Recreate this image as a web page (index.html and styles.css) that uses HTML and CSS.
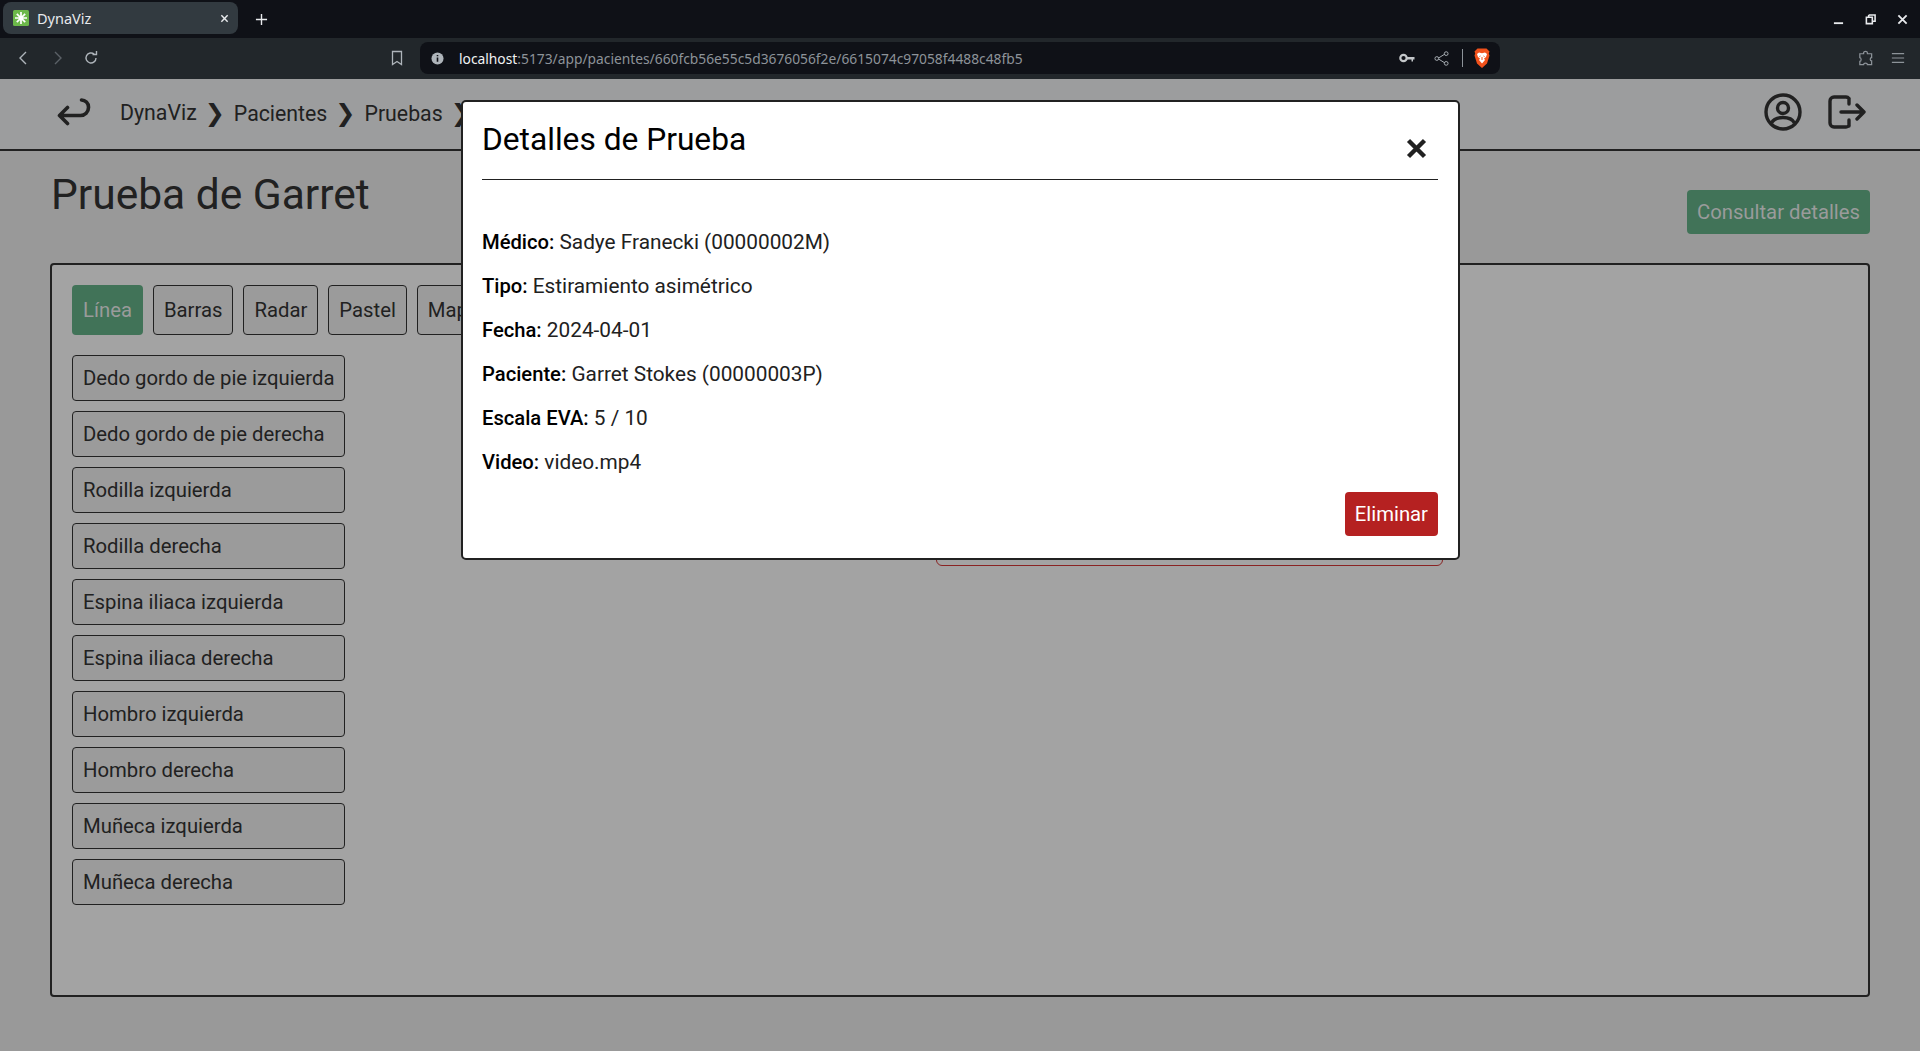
FILE: index.html
```html
<!DOCTYPE html>
<html lang="es">
  <head>
    <meta charset="utf-8">
    <title>DynaViz</title>
    <link rel="stylesheet" href="styles.css">
  </head>
  <body>
    <div class="tabstrip">
      <div class="tab">
        <svg class="favicon" viewBox="0 0 16 16">
          <rect width="16" height="16" rx="1.5" fill="#6cb84a"/>
          <path d="M8 2v12M2 8h12M3.8 3.8l8.4 8.4M12.2 3.8l-8.4 8.4" stroke="#fff" stroke-width="1.7"/>
        </svg>
        <span class="tab-title">DynaViz</span>
        <svg class="tab-close" viewBox="0 0 10 10"><path d="M1.5 1.5l7 7M8.5 1.5l-7 7" stroke="#e8eaed" stroke-width="1.6"/></svg>
      </div>
      <svg class="tab-new" viewBox="0 0 14 14"><path d="M7 1v12M1 7h12" stroke="#e8eaed" stroke-width="1.5"/></svg>
      <div class="win-controls">
        <svg viewBox="0 0 12 12"><path d="M1 10h10" stroke="#e8eaed" stroke-width="2"/></svg>
        <svg viewBox="0 0 12 12"><path d="M4 1h7v7H8.500M4 1v2.500M1.500 3.500h6.500v7H1.500z" fill="none" stroke="#e8eaed" stroke-width="1.700"/></svg>
        <svg viewBox="0 0 12 12"><path d="M1.500 1.500l9 9M10.500 1.500l-9 9" stroke="#e8eaed" stroke-width="2"/></svg>
      </div>
    </div>

    <div class="toolbar">
      <svg class="tool-icon nav-back" viewBox="0 0 16 16"><path d="M11 2L5 8l6 6" fill="none" stroke="#aeb4ba" stroke-width="1.400"/></svg>
      <svg class="tool-icon nav-forward" viewBox="0 0 16 16"><path d="M5 2l6 6-6 6" fill="none" stroke="#5b6167" stroke-width="1.400"/></svg>
      <svg class="tool-icon nav-reload" viewBox="0 0 16 16"><path d="M13 8a5 5 0 1 1-1.700-3.800M9.500 4.500h4V1" fill="none" stroke="#aeb4ba" stroke-width="1.400"/></svg>
      <svg class="tool-icon nav-bookmark" viewBox="0 0 16 16"><path d="M3.500 1.500h9v13L8 11.500l-4.500 3z" fill="none" stroke="#aeb4ba" stroke-width="1.300"/></svg>
      <div class="address">
        <svg class="info-icon" viewBox="0 0 14 14"><circle cx="7" cy="7" r="6.500" fill="#aeb4ba"/><path d="M7 6v4.500M7 3.200v1.500" stroke="#0f1117" stroke-width="1.700"/></svg>
        <span class="url"><span class="url-host">localhost</span>:5173/app/pacientes/660fcb56e55c5d3676056f2e/6615074c97058f4488c48fb5</span>
        <svg class="key-icon" viewBox="0 0 16 10"><circle cx="4.500" cy="5" r="3.200" fill="none" stroke="#c4c7ca" stroke-width="2.200"/><path d="M8 4h7.500v2.500h-1.500v2h-1.500v-2H8z" fill="#c4c7ca"/></svg>
        <svg class="share-icon" viewBox="0 0 16 16"><path d="M4 8l8-5M4 8l8 5" stroke="#aeb4ba" stroke-width="1"/><circle cx="3" cy="8" r="2" fill="#0f1117" stroke="#aeb4ba"/><circle cx="13" cy="2.800" r="2" fill="#0f1117" stroke="#aeb4ba"/><circle cx="13" cy="13.200" r="2" fill="#0f1117" stroke="#aeb4ba"/></svg>
        <span class="address-sep"></span>
        <svg class="brave-icon" viewBox="0 0 16 20">
          <path d="M3.500 0.500h9l2 2 1 1-.7 2 .7 2-2.500 8L8 20l-5-4.500-2.500-8 .7-2-.7-2 1-1z" fill="#f1511b"/>
          <path d="M3 6l2-1.500 3 .8 3-.8L13 6l-1 3-2 1.500L11 12l-3 3.500L5 12l1-1.500L4 9z" fill="#fff"/>
          <path d="M6.500 8l-1 .5M9.500 8l1 .5M8 9v3" stroke="#f1511b" stroke-width="1"/>
        </svg>
      </div>
      <svg class="tool-icon puzzle-icon" viewBox="0 0 18 18"><path d="M7 3.500C7 1.500 11 1.500 11 3.500V4.500h4.500V8.500C13.500 8.500 13.500 12 15.500 12V16H11C11 14 7 14 7 16H3V12.500C4.800 12.500 4.800 8.500 3 8.500V4.500H7z" fill="none" stroke="#8d9399" stroke-width="1.300"/></svg>
      <svg class="tool-icon menu-icon" viewBox="0 0 16 16"><path d="M1 3h14M1 8h14M1 13h14" stroke="#8d9399" stroke-width="1.200"/></svg>
    </div>

    <nav class="navbar">
      <svg class="back-arrow" viewBox="0 0 34 28"><path d="M2.500 17.500h21a8 8 0 0 0 8-8V9a7 7 0 0 0-7-7M10.500 9.500l-8 8 8 8" fill="none" stroke="#212121" stroke-width="3.600" stroke-linecap="round" stroke-linejoin="round"/></svg>
      <ol class="crumbs">
        <li>DynaViz</li>
        <li>Pacientes</li>
        <li>Pruebas</li>
        <li></li>
      </ol>
      <div class="nav-icons">
        <svg class="user-icon" viewBox="0 0 38 38">
          <circle cx="19" cy="19" r="17" fill="none" stroke="#212121" stroke-width="3.400"/>
          <circle cx="19" cy="15" r="5.500" fill="none" stroke="#212121" stroke-width="3.400"/>
          <path d="M7.500 30c2-4 6-5.500 11.500-5.500S28.500 26 30.500 30" fill="none" stroke="#212121" stroke-width="3.400"/>
        </svg>
        <svg class="logout-icon" viewBox="0 0 38 34">
          <path d="M18 2H6a4 4 0 0 0-4 4v22a4 4 0 0 0 4 4h12a4 4 0 0 0 3-1.500M21 3.500A4 4 0 0 0 18 2M21 9V3.500M21 31v-6M13 17h23M29 10l7 7-7 7" fill="none" stroke="#212121" stroke-width="3.400" stroke-linecap="round" stroke-linejoin="round"/>
        </svg>
      </div>
    </nav>

    <main class="page">
      <div class="page-head">
        <h1 class="page-title">Prueba de Garret</h1>
        <button class="btn btn-green btn-details">Consultar detalles</button>
      </div>

      <section class="card">
        <div class="chart-tabs">
          <button class="btn btn-green btn-tab">Línea</button>
          <button class="btn btn-outline btn-tab">Barras</button>
          <button class="btn btn-outline btn-tab">Radar</button>
          <button class="btn btn-outline btn-tab">Pastel</button>
          <button class="btn btn-outline btn-tab">Mapa</button>
        </div>
        <div class="card-body">
          <div class="joints">
            <button class="btn btn-outline joint">Dedo gordo de pie izquierda</button>
            <button class="btn btn-outline joint">Dedo gordo de pie derecha</button>
            <button class="btn btn-outline joint">Rodilla izquierda</button>
            <button class="btn btn-outline joint">Rodilla derecha</button>
            <button class="btn btn-outline joint">Espina iliaca izquierda</button>
            <button class="btn btn-outline joint">Espina iliaca derecha</button>
            <button class="btn btn-outline joint">Hombro izquierda</button>
            <button class="btn btn-outline joint">Hombro derecha</button>
            <button class="btn btn-outline joint">Muñeca izquierda</button>
            <button class="btn btn-outline joint">Muñeca derecha</button>
          </div>
          <div class="chart-area">
            <div class="chart-alert"></div>
          </div>
        </div>
      </section>
    </main>

    <div class="modal">
      <div class="modal-head">
        <h2 class="modal-title">Detalles de Prueba</h2>
        <svg class="modal-close" viewBox="0 0 21 21"><path d="M2.500 2.500l16 16M18.500 2.500l-16 16" stroke="#212121" stroke-width="4.400"/></svg>
      </div>
      <div class="modal-body">
        <p><b>Médico:</b> Sadye Franecki (00000002M)</p>
        <p><b>Tipo:</b> Estiramiento asimétrico</p>
        <p><b>Fecha:</b> 2024-04-01</p>
        <p><b>Paciente:</b> Garret Stokes (00000003P)</p>
        <p><b>Escala EVA:</b> 5 / 10</p>
        <p><b>Video:</b> video.mp4</p>
      </div>
      <div class="modal-foot">
        <button class="btn btn-red">Eliminar</button>
      </div>
    </div>
  </body>
</html>
```

FILE: styles.css
```css
* { box-sizing: border-box; }
html, body { margin: 0; height: 100%; }
body { position: relative; height: 1051px; overflow: hidden; background: #999999; color: #212121; font-family: Roboto, "Noto Sans", sans-serif; font-size: 20.3px; }
button { font-family: inherit; font-size: inherit; }
svg { display: block; flex: none; }

/* browser chrome */
.tabstrip { display: flex; align-items: center; height: 38px; background: #0f1117; padding-left: 3px; }
.tab { display: flex; align-items: center; width: 235px; height: 32px; margin-top: -2px; padding: 0 9px 0 10px; border-radius: 8px; background: #323a40; }
.favicon { width: 16px; height: 16px; }
.tab-title { flex: 1; margin-left: 8px; color: #e8eaed; font-family: "Noto Sans", sans-serif; font-size: 14.5px; }
.tab-close { width: 9px; height: 9px; }
.tab-new { width: 13px; height: 13px; margin-left: 17px; }
.win-controls { display: flex; gap: 21px; margin-left: auto; padding-right: 12px; }
.win-controls svg { width: 11px; height: 11px; }

.toolbar { display: flex; align-items: center; height: 41px; padding: 0 15px 1px 15px; background: #22272b; }
.tool-icon { width: 16px; height: 16px; }
.nav-forward { margin-left: 19px; }
.nav-reload { margin-left: 17px; }
.nav-bookmark { margin-left: 290px; }
.address { display: flex; align-items: center; width: 1080px; height: 32px; margin-left: 15px; padding: 0 10px 0 11px; border-radius: 8px; background: #0f1117; }
.info-icon { width: 13px; height: 13px; }
.url { flex: 1; margin-left: 15px; color: #8d9399; font-family: "Noto Sans", sans-serif; font-size: 13.8px; white-space: nowrap; }
.url-host { color: #f1f3f4; }
.key-icon { width: 16px; height: 10px; }
.share-icon { width: 15px; height: 15px; margin-left: 19px; }
.address-sep { width: 1px; height: 18px; margin-left: 13px; background: #8d9399; }
.brave-icon { width: 16px; height: 20px; margin-left: 11px; }
.puzzle-icon { width: 17px; height: 18px; margin-left: auto; }
.menu-icon { width: 14px; margin-left: 17px; }

/* navbar */
.navbar { display: flex; align-items: center; height: 72px; padding: 0 54px 5px 57px; border-bottom: 2px solid #212121; background: #9c9d9e; }
.back-arrow { width: 34px; height: 28px; }
.crumbs { display: flex; align-items: center; margin: 2px 0 0 29px; padding: 0; list-style: none; font-size: 21.3px; }
.crumbs li + li::before { content: "\276F"; margin: 0 9px 0 8px; font-family: "DejaVu Sans", sans-serif; font-size: 24px; }
.nav-icons { display: flex; align-items: center; gap: 26px; margin-left: auto; }
.user-icon { width: 38px; height: 38px; }
.logout-icon { width: 38px; height: 34px; }

/* page */
.page { padding: 20px 50px 0 50px; }
.page-head { display: flex; justify-content: space-between; margin-bottom: 29px; padding-left: 1px; }
.page-title { margin: 0; font-size: 42.5px; font-weight: 400; line-height: 48px; }
.btn { border: 1px solid transparent; border-radius: 4px; color: #212121; line-height: 24px; }
.btn-green { height: 50px; padding: 0 10px; background: #417358; color: #9a9b9b; white-space: nowrap; }
.btn-details { margin-top: 19px; height: 44px; padding: 0 9px; }
.btn-outline { border-color: #212121; background: #9b9b9b; }
.btn-red { height: 44px; padding: 0 9px; background: #b52121; color: #fff; }

.card { height: 734px; padding: 20px 20px; border: 2px solid #212121; border-radius: 4px; background: #a3a3a3; }
.chart-tabs { display: flex; gap: 10px; height: 50px; }
.btn-tab { height: 50px; margin: 0; padding: 0 10px; }
.card-body { display: flex; margin-top: 20px; }
.joints { display: flex; flex-direction: column; gap: 10px; width: 273px; }
.joint { height: 46px; padding: 0 10px; text-align: left; white-space: nowrap; }
.chart-area { padding-left: 591px; }
.chart-alert { width: 507px; height: 211px; border: 1px solid #8a2323; border-radius: 6px; }

/* modal */
.modal { position: absolute; left: 461px; top: 100px; width: 999px; height: 460px; padding: 0 20px 0 19px; border: 2px solid #212121; border-radius: 5px; background: #fff; color: #000; }
.modal-head { display: flex; justify-content: space-between; height: 78px; border-bottom: 1px solid #212121; }
.modal-title { margin: 20px 0 0 0; font-size: 31.7px; font-weight: 400; line-height: 36px; }
.modal-close { width: 21px; height: 21px; margin: 36px 11px 0 0; }
.modal-body { padding-top: 48px; }
.modal-body p { margin: 0 0 16px; font-size: 20.8px; line-height: 28px; color: #212121; }
.modal-body b { font-size: 20.2px; font-weight: 500; color: #000; }
.modal-foot { display: flex; justify-content: flex-end; margin-top: 7px; }
```
